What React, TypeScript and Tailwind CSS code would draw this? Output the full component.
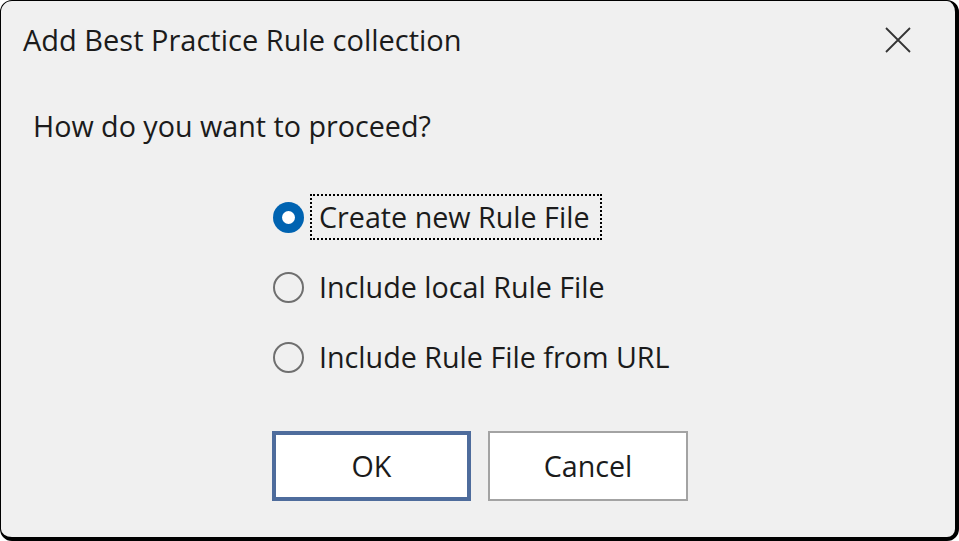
import { useState } from "react";

const options = [
  "Create new Rule File",
  "Include local Rule File",
  "Include Rule File from URL",
];

function Radio({ checked }: { checked: boolean }) {
  return checked ? (
    <span className="flex h-[31px] w-[31px] shrink-0 items-center justify-center rounded-full bg-[#0063b1]">
      <span className="h-[13px] w-[13px] rounded-full bg-white" />
    </span>
  ) : (
    <span className="h-[31px] w-[31px] shrink-0 rounded-full border-2 border-[#6f6f6f] bg-transparent" />
  );
}

export default function App() {
  const [choice, setChoice] = useState(0);

  return (
    <div className="h-[541px] w-[959px] bg-white font-['Open_Sans',sans-serif] text-[28.7px] text-[#1b1b1b]">
      <div className="flex h-full w-full flex-col rounded-[12px] border-t-[1.5px] border-l-[1.5px] border-r-4 border-b-4 border-black bg-[#f0f0f0]">
        <div className="flex h-[77px] items-center justify-between pl-[22px] pr-[44px]">
          <span className="text-[29px]">Add Best Practice Rule collection</span>
          <svg width="26" height="26" viewBox="0 0 26 26" className="text-[#333]">
            <path d="M1 1 L25 25 M25 1 L1 25" stroke="currentColor" strokeWidth="1.8" fill="none" />
          </svg>
        </div>

        <div className="mt-[28px] flex h-[40px] items-center pl-[32px]">How do you want to proceed?</div>

        <div className="mt-[48px] flex flex-col gap-[24px] pl-[272px]">
          {options.map((label, i) => (
            <button
              key={label}
              onClick={() => setChoice(i)}
              className="flex h-[46px] items-center gap-[6px] text-left"
            >
              <Radio checked={choice === i} />
              <span
                className={`flex h-[46px] items-center border-2 border-dotted pl-[7px] pr-[10px] ${
                  i === 0 ? "border-black" : "border-transparent"
                }`}
              >
                {label}
              </span>
            </button>
          ))}
        </div>

        <div className="mt-[51px] flex gap-[17px] pl-[271px]">
          <button className="h-[70px] w-[199px] border-4 border-[#4e6c9c] bg-white">OK</button>
          <button className="h-[70px] w-[200px] border-2 border-[#a3a3a3] bg-white">Cancel</button>
        </div>
      </div>
    </div>
  );
}
